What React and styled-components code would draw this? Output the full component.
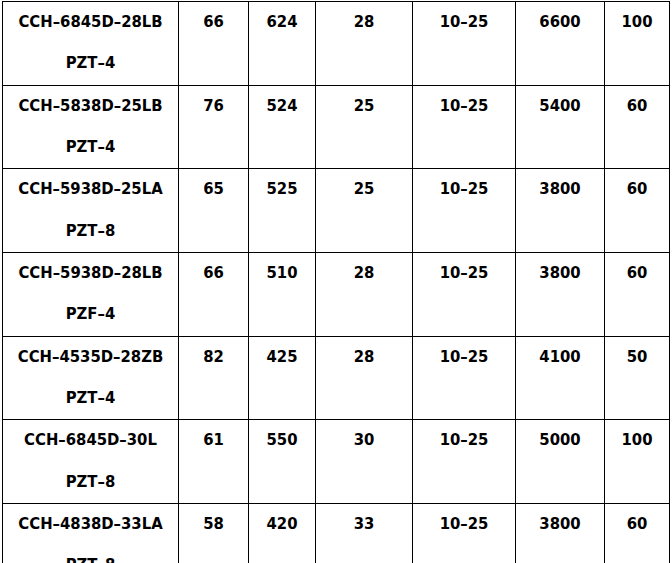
import React from 'react';
import styled, { createGlobalStyle } from 'styled-components';

const GlobalStyle = createGlobalStyle`
	html, body {
		margin: 0;
		padding: 0;
		background: #fff;
		overflow: hidden;
	}
	body {
		font-family: "DejaVu Sans Condensed", "DejaVu Sans", sans-serif;
		font-stretch: condensed;
		color: #000;
	}
`;

const COLS = [176, 70, 67, 97, 103, 89, 65];

const Page = styled.div`
	height: 563px;
	overflow: hidden;
	padding: 1px 0 0 2px;
`;

const Grid = styled.div`
	display: grid;
	grid-template-columns: ${COLS.map(w => `${w}px`).join(' ')};
	border-top: 1px solid #000;
	border-left: 1px solid #000;
	width: max-content;
`;

const Cell = styled.div`
	border-right: 1px solid #000;
	border-bottom: 1px solid #000;
	text-align: center;
	font-weight: bold;
	font-size: 16.5px;
	line-height: 41.35px;
	height: 82.7px;
	box-sizing: content-box;
	white-space: nowrap;
`;

const Line = styled.div`
	transform: translateY(-1px);
`;

const rows = [
	['CCH–6845D–28LB', 'PZT–4', '66', '624', '28', '10–25', '6600', '100'],
	['CCH–5838D–25LB', 'PZT–4', '76', '524', '25', '10–25', '5400', '60'],
	['CCH–5938D–25LA', 'PZT–8', '65', '525', '25', '10–25', '3800', '60'],
	['CCH–5938D–28LB', 'PZF–4', '66', '510', '28', '10–25', '3800', '60'],
	['CCH–4535D–28ZB', 'PZT–4', '82', '425', '28', '10–25', '4100', '50'],
	['CCH–6845D–30L', 'PZT–8', '61', '550', '30', '10–25', '5000', '100'],
	['CCH–4838D–33LA', 'PZT–8', '58', '420', '33', '10–25', '3800', '60'],
];

export default function App() {
	return (
		<Page>
			<GlobalStyle />
			<Grid>
				{rows.map(([model, material, ...values]) => (
					<React.Fragment key={model}>
						<Cell>
							<Line>{model}</Line>
							<Line>{material}</Line>
						</Cell>
						{values.map((v, i) => (
							<Cell key={i}>
								<Line>{v}</Line>
							</Cell>
						))}
					</React.Fragment>
				))}
			</Grid>
		</Page>
	);
}
